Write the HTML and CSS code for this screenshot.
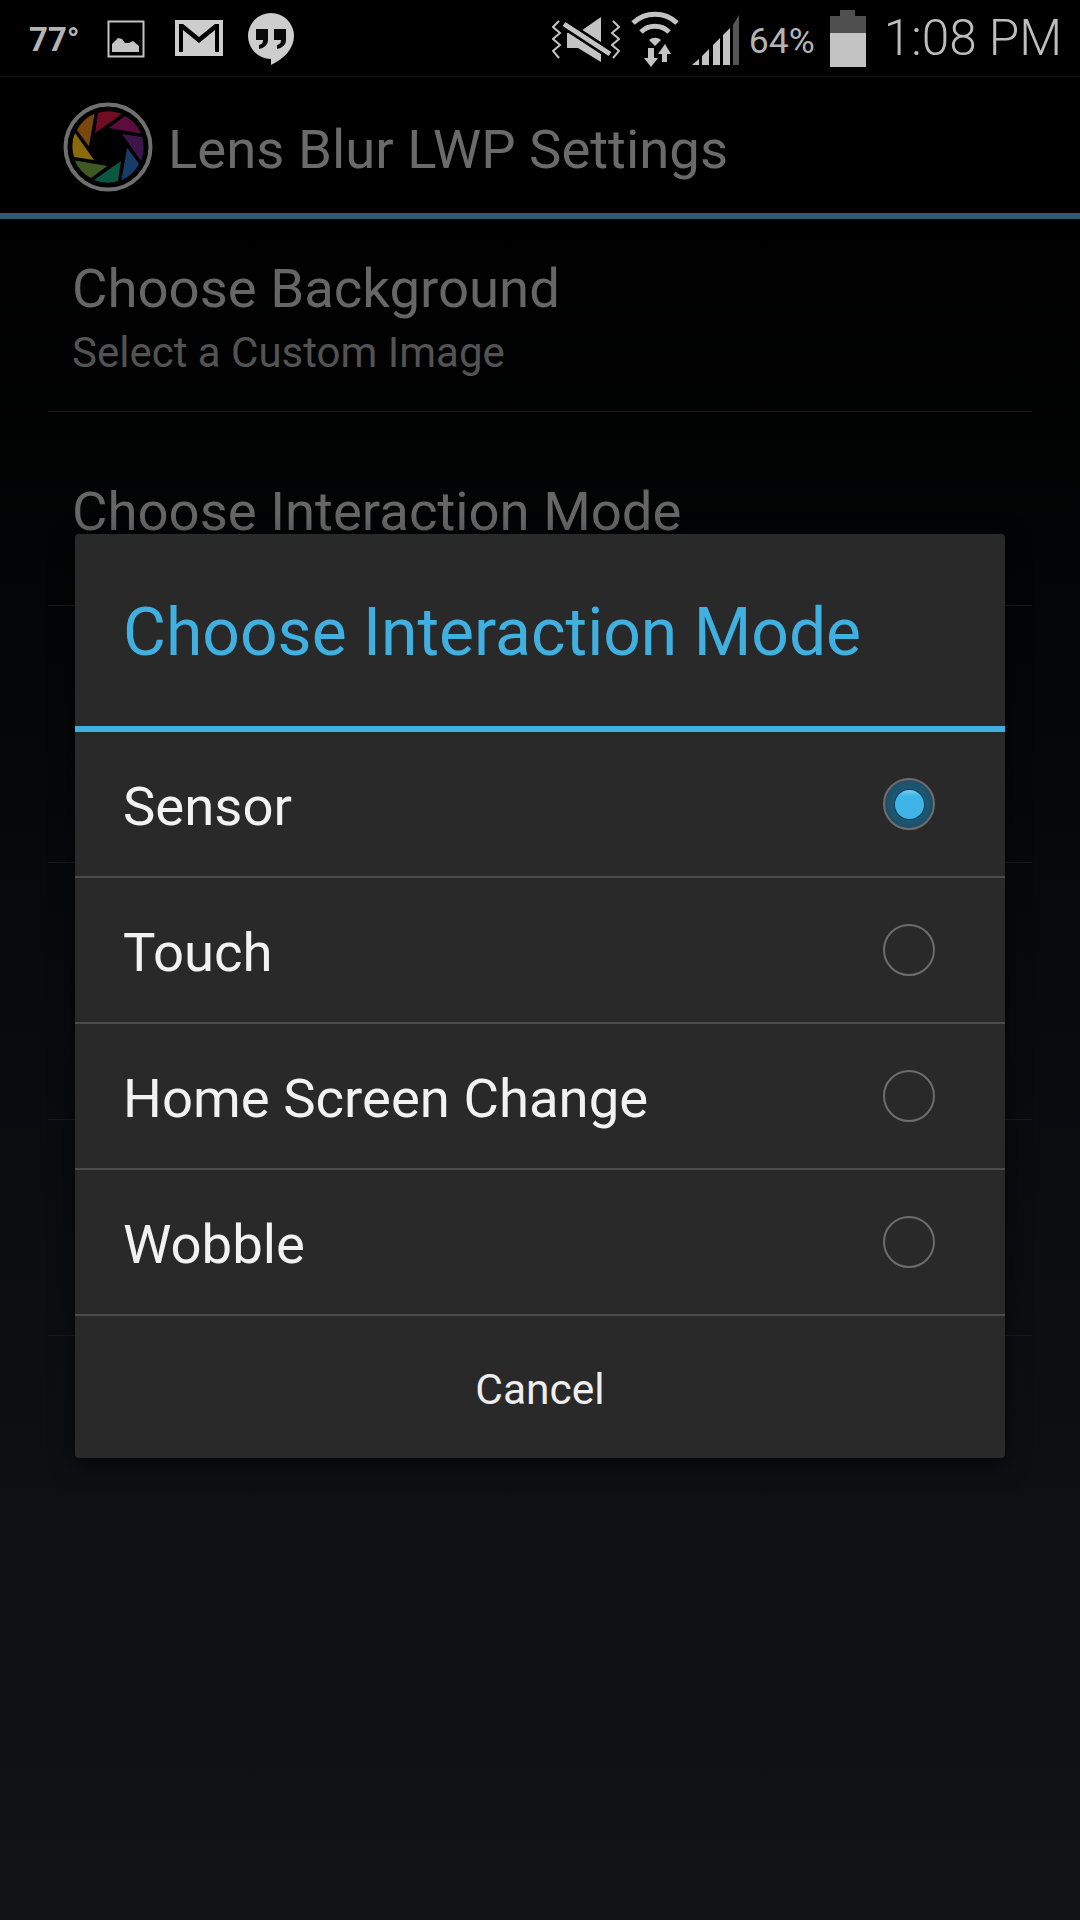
FILE: index.html
```html
<!DOCTYPE html>
<html lang="en">
<head>
  <meta charset="UTF-8" />
  <meta name="viewport" content="width=device-width, initial-scale=1" />
  <title>Lens Blur LWP Settings</title>
  <link rel="stylesheet" href="styles.css">
</head>
<body>
  <!-- Status Bar -->
  <div class="status-bar">
    <div class="status-left">
      <span class="temp">77°</span>
      <svg class="ic-picture" width="38" height="38" viewBox="0 0 38 38">
        <rect x="1.5" y="1.5" width="35" height="35" fill="none" stroke="#c4c4c4" stroke-width="2"/>
        <path d="M5 32V24L11 18L15 19L18 23L22 23L26 21L32 26V32Z" fill="#c4c4c4"/>
      </svg>
      <svg class="ic-gmail" width="48" height="36" viewBox="0 0 48 36">
        <path d="M0 0H48V36H0Z M4 32H8V10L24 23L40 10V32H44V4H40L24 17L8 4H4Z" fill="#cdcdcd" fill-rule="evenodd"/>
      </svg>
      <svg class="ic-hangouts" width="48" height="54" viewBox="0 0 48 54">
        <path d="M24 1A23 23 0 0 1 47 24C47 36 38 46 24 53V47A23 23 0 0 1 24 1Z" fill="#cdcdcd"/>
        <path d="M9 17H21V28C21 33 17 36 12 37V33C15 32 16 31 16 28H9Z M27 17H39V28C39 33 35 36 30 37V33C33 32 34 31 34 28H27Z" fill="#0a0a0a"/>
      </svg>
    </div>
    <div class="status-right">
      <svg class="ic-mute" width="68" height="48" viewBox="0 0 68 48">
        <path d="M15 18H26L49 2V47L26 33H15Z" fill="#c4c4c4"/>
        <path d="M12 9L58 39" stroke="#000" stroke-width="10"/>
        <path d="M12 9L58 39" stroke="#c4c4c4" stroke-width="5"/>
        <path d="M7 6L1 12L8 18L1 24L8 30L1 36L7 43 M61 6L67 12L60 18L67 24L60 30L67 36L61 43" fill="none" stroke="#c4c4c4" stroke-width="2"/>
      </svg>
      <svg class="ic-wifi" width="50" height="56" viewBox="0 0 50 56">
        <path d="M3 12A32 32 0 0 1 47 12 M11 21A20 20 0 0 1 39 21" fill="none" stroke="#c4c4c4" stroke-width="5"/>
        <path d="M19 29A9 9 0 0 1 31 29L25 35Z" fill="#c4c4c4"/>
        <path d="M18 37H24V47H28L21 56L14 47H18Z M35 33L41 43H37V51H32V43H28Z" fill="#c4c4c4"/>
      </svg>
      <svg class="ic-signal" width="47" height="52" viewBox="0 0 47 52">
        <path d="M0 51L7 45V51Z M10 42L17 35V51H10Z M21 31L28 24V51H21Z M31 21L38 14V51H31Z" fill="#c4c4c4"/>
        <path d="M41 11L47 1V51H41Z" fill="#555"/>
      </svg>
      <span class="battery-pct">64%</span>
      <div class="battery">
        <div class="battery-cap"></div>
        <div class="battery-empty"></div>
        <div class="battery-full"></div>
      </div>
      <span class="clock">1:08 PM</span>
    </div>
  </div>

  <!-- Action Bar -->
  <div class="action-bar">
    <svg class="app-icon" width="90" height="90" viewBox="-45 -45 90 90">
      <defs>
        <path id="blade" d="M-13 -14L-10 -34A36 36 0 0 1 14 -33Z"/>
      </defs>
      <circle r="42.5" fill="#000" stroke="#6f6f6f" stroke-width="4"/>
      <use href="#blade" fill="#6e0d24"/>
      <use href="#blade" fill="#5c0d3e" transform="rotate(45)"/>
      <use href="#blade" fill="#3d154a" transform="rotate(90)"/>
      <use href="#blade" fill="#173c68" transform="rotate(135)"/>
      <use href="#blade" fill="#0b5741" transform="rotate(180)"/>
      <use href="#blade" fill="#3e5922" transform="rotate(225)"/>
      <use href="#blade" fill="#8a6a0c" transform="rotate(270)"/>
      <use href="#blade" fill="#7c470c" transform="rotate(315)"/>
    </svg>
    <span class="app-title">Lens Blur LWP Settings</span>
  </div>

  <!-- Settings List -->
  <div class="settings">
    <div class="setting setting-bg">
      <div class="setting-title">Choose Background</div>
      <div class="setting-sub">Select a Custom Image</div>
    </div>
    <div class="setting setting-mode">
      <div class="setting-title">Choose Interaction Mode</div>
    </div>
    <div class="setting setting-plain"></div>
    <div class="setting setting-plain"></div>
    <div class="setting setting-last"></div>
  </div>

  <!-- Dialog -->
  <div class="dialog">
    <div class="dialog-title">Choose Interaction Mode</div>
    <div class="dialog-row">
      <span>Sensor</span>
      <div class="radio radio-on"></div>
    </div>
    <div class="dialog-row">
      <span>Touch</span>
      <div class="radio"></div>
    </div>
    <div class="dialog-row">
      <span>Home Screen Change</span>
      <div class="radio"></div>
    </div>
    <div class="dialog-row">
      <span>Wobble</span>
      <div class="radio"></div>
    </div>
    <div class="dialog-cancel">Cancel</div>
  </div>
</body>
</html>
```

FILE: styles.css
```css
* {
  margin: 0;
  padding: 0;
  box-sizing: border-box;
}

body {
  width: 1080px;
  height: 1920px;
  font-family: 'Roboto', sans-serif;
  background: linear-gradient(180deg, #000 0%, #000 12%, #0b0d10 65%, #111316 100%);
  position: relative;
  overflow: hidden;
}

/* Status Bar */
.status-bar {
  height: 77px;
  background: #000;
  border-bottom: 1px solid #141414;
  display: flex;
  justify-content: space-between;
  padding: 0 18px 0 29px;
}

.status-left {
  display: flex;
  align-items: flex-start;
}

.temp {
  font-size: 33px;
  font-weight: 700;
  color: #b4b4b4;
  margin-top: 20px;
  width: 78px;
}

.ic-picture {
  margin-top: 20px;
}

.ic-gmail {
  margin: 20px 0 0 30px;
}

.ic-hangouts {
  margin: 12px 0 0 24px;
}

.status-right {
  display: flex;
  align-items: flex-start;
}

.ic-mute {
  margin-top: 15px;
}

.ic-wifi {
  margin: 11px 0 0 10px;
}

.ic-signal {
  margin: 14px 0 0 12px;
}

.battery-pct {
  font-size: 35.5px;
  color: #b4b4b4;
  margin: 20px 0 0 10px;
  width: 81px;
}

.battery {
  width: 36px;
  height: 57px;
  margin-top: 10px;
  display: flex;
  flex-direction: column;
  align-items: center;
}

.battery-cap {
  width: 15px;
  height: 6px;
  background: #4f4f4f;
}

.battery-empty {
  width: 36px;
  height: 17px;
  background: #4f4f4f;
}

.battery-full {
  width: 36px;
  height: 34px;
  background: #c4c4c4;
}

.clock {
  font-size: 49.5px;
  font-weight: 300;
  color: #bdbdbd;
  margin: 9px 0 0 18px;
}

/* Action Bar */
.action-bar {
  height: 142px;
  background: #000;
  border-bottom: 6px solid #2f5872;
  display: flex;
  align-items: center;
  padding: 4px 0 0 63px;
}

.app-title {
  font-size: 54.5px;
  color: #6a6a6a;
  margin: 4px 0 0 15px;
}

/* Settings List */
.settings {
  padding: 0 48px;
}

.setting {
  border-bottom: 1px solid #1a1a1a;
  padding: 0 24px;
}

.setting-bg {
  height: 193px;
  padding-top: 39px;
}

.setting-mode {
  height: 194px;
  padding-top: 69px;
}

.setting-plain {
  height: 257px;
}

.setting-last {
  height: 216px;
}

.setting-title {
  font-size: 54.5px;
  line-height: 60px;
  color: #666;
}

.setting-sub {
  font-size: 42px;
  line-height: 48px;
  margin-top: 11px;
  color: #535353;
}

/* Dialog */
.dialog {
  position: absolute;
  top: 534px;
  left: 75px;
  width: 930px;
  height: 924px;
  background: #292929;
  border-radius: 4px;
  box-shadow: 0 6px 24px rgba(0, 0, 0, 0.6);
}

.dialog-title {
  height: 198px;
  padding: 0 48px 0;
  border-bottom: 6px solid #3fb0e0;
  font-size: 66px;
  line-height: 197px;
  color: #3fb0e0;
  white-space: nowrap;
}

.dialog-row {
  height: 146px;
  border-bottom: 2px solid #4b4b4b;
  display: flex;
  align-items: center;
  justify-content: space-between;
  padding: 0 70px 0 48px;
  font-size: 54.5px;
  color: #f2f2f2;
}

.dialog-row span {
  padding-top: 4px;
}

.radio {
  width: 52px;
  height: 52px;
  border: 2px solid #6d6d6d;
  border-radius: 50%;
}

.radio-on {
  display: flex;
  align-items: center;
  justify-content: center;
  background: radial-gradient(circle, #1c5673 0%, #1c5673 55%, #2f3d45 100%);
}

.radio-on::before {
  content: '';
  width: 29px;
  height: 29px;
  border-radius: 50%;
  background: linear-gradient(180deg, #74cdf0 0%, #3fb4e8 22%, #3fb4e8 100%);
  box-shadow: 0 0 0 1px #123f55;
}

.dialog-cancel {
  height: 142px;
  display: flex;
  align-items: center;
  justify-content: center;
  padding-top: 4px;
  font-size: 42.5px;
  color: #eee;
}
```
